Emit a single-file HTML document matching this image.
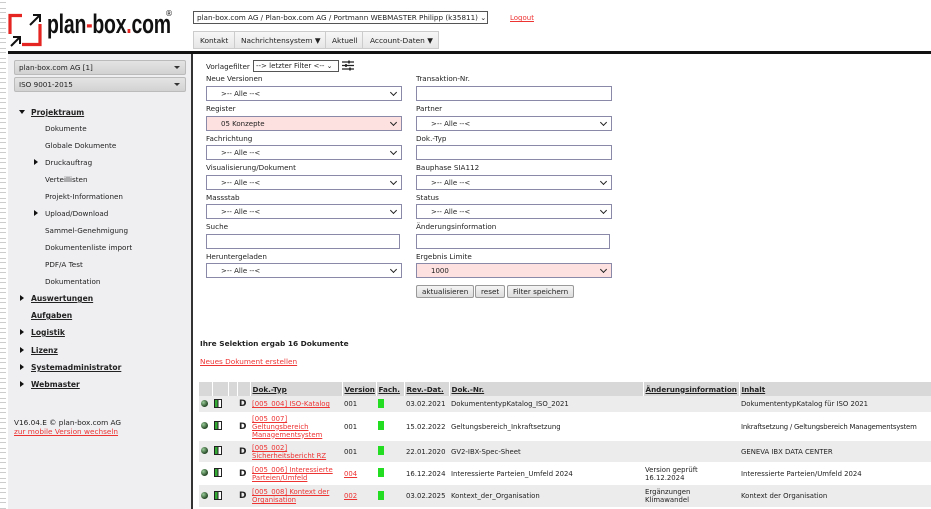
<!DOCTYPE html>
<html><head><meta charset="utf-8"><style>
*{margin:0;padding:0;box-sizing:border-box}
body{width:931px;height:509px;overflow:hidden;background:#fff;font-family:"DejaVu Sans","Liberation Sans",sans-serif;font-size:7.4px;color:#222;position:relative}
.a{position:absolute;white-space:nowrap}
.strip{position:absolute;left:0;top:0;width:6px;height:509px;background:repeating-linear-gradient(#fff 0 2px,#ccc 2px 3px,#fff 3px 8px,#ccc 8px 9px,#fff 9px 10px)}
.side{position:absolute;left:8px;top:54px;width:183px;height:455px;background:#efeff2}
.vl{position:absolute;left:191px;top:54px;width:2px;height:455px;background:#333}
.hl{position:absolute;left:8px;top:51px;width:923px;height:3px;background:#111}
.ssel{position:absolute;left:14px;width:172px;height:15px;border:1px solid #bbb;border-radius:2px;background:linear-gradient(#e4e4e4,#d2d2d2);padding:2px 4px;font-size:7.2px}
.ssel:after{content:"";position:absolute;right:5px;top:5px;border:3px solid transparent;border-top:3px solid #333}
.nav{position:absolute;left:31px;font-weight:bold;text-decoration:underline;font-size:7.6px}
.sub{position:absolute;left:45px;font-size:7.2px}
.tri{position:absolute;border:3px solid transparent;border-left:4px solid #111}
.trid{position:absolute;border:3px solid transparent;border-top:4px solid #111}
.lbl{position:absolute;font-size:7.2px}
.f{position:absolute;width:196px;height:15px;border:1px solid #8a8aa8;background:#fff;font-size:7px;padding:3px 0 0 14px}
.f.s:after{content:"";position:absolute;right:5px;top:3px;width:4px;height:4px;border-right:1.5px solid #222;border-bottom:1.5px solid #222;transform:rotate(45deg)}
.pink{background:#fde0e0}
.btn{position:absolute;top:285px;height:13px;border:1px solid #999;background:linear-gradient(#f4f4f4,#ddd);font-size:7.2px;padding:1px 5px;border-radius:2px}
table{position:absolute;left:199px;top:382px;border-collapse:collapse;width:732px;table-layout:fixed}
td{font-size:6.9px;vertical-align:middle;padding:0 2px;white-space:nowrap;overflow:hidden}
th{background:#d8d8d8;font-size:7.2px;text-align:left;padding:0 2px;height:14px;border-right:1px solid #fff;text-decoration:underline;white-space:nowrap;overflow:hidden}
tr.g td{background:#ececec}
.r{color:#e33;text-decoration:underline}
.dot{display:inline-block;width:7px;height:7px;border-radius:50%;background:radial-gradient(circle at 35% 35%,#9c9,#242 70%)}
.bk{display:inline-block;width:8px;height:9px;border:1.5px solid #222;background:linear-gradient(90deg,#3a3 0 45%,#222 45% 55%,#fff 55%)}
.gr{display:inline-block;width:6px;height:9px;background:#2d2}
</style></head><body>
<div class="strip"></div>
<svg class="a" style="left:8px;top:12px" width="36" height="36" viewBox="0 0 36 36">
<path d="M2 22V3.5H14" fill="none" stroke="#e52521" stroke-width="3.2"/>
<path d="M32 12V32.5H14" fill="none" stroke="#e52521" stroke-width="3.2"/>
<path d="M22 13L31 4M25 3H32V10" fill="none" stroke="#111" stroke-width="2"/>
<path d="M3 34L11 26M5 25H12V32" fill="none" stroke="#111" stroke-width="2"/>
</svg>
<div class="a" style="left:47px;top:9px;font-family:'Liberation Sans',sans-serif;font-weight:bold;font-size:27px;letter-spacing:-0.3px;color:#111;transform:scaleX(0.72);transform-origin:left">plan<span style="color:#e52521">-</span>box<span style="color:#e52521">.</span>com</div>
<div class="a" style="left:165px;top:9px;font-size:8px">®</div>
<div class="a" style="left:193px;top:11px;width:295px;height:13px;border:1px solid #555;font-size:7.2px;padding:1px 3px">plan-box.com AG / Plan-box.com AG / Portmann WEBMASTER Philipp (k35811) ⌄</div>
<div class="a r" style="left:510px;top:14px;font-size:7px">Logout</div>
<div class="a" style="left:193px;top:31px;height:18px;width:246px;border:1px solid #ccc;background:linear-gradient(#f7f7f7,#e6e6e6);font-size:7.4px">
<span class="a" style="left:6px;top:4px">Kontakt</span><span class="a" style="left:40px;top:0;height:16px;border-left:1px solid #ccc"></span>
<span class="a" style="left:47px;top:4px">Nachrichtensystem ▼</span><span class="a" style="left:131px;top:0;height:16px;border-left:1px solid #ccc"></span>
<span class="a" style="left:138px;top:4px">Aktuell</span><span class="a" style="left:168px;top:0;height:16px;border-left:1px solid #ccc"></span>
<span class="a" style="left:176px;top:4px">Account-Daten ▼</span></div>
<div class="hl"></div>
<div class="side"></div>
<div class="vl"></div>
<div class="ssel" style="top:60px">plan-box.com AG [1]</div>
<div class="ssel" style="top:77px">ISO 9001-2015</div>
<div class="trid" style="left:19px;top:110px"></div>
<div class="nav" style="top:108px">Projektraum</div>
<div class="sub" style="top:124px">Dokumente</div>
<div class="sub" style="top:141px">Globale Dokumente</div>
<div class="tri" style="left:34px;top:159px"></div><div class="sub" style="top:158px">Druckauftrag</div>
<div class="sub" style="top:175px">Verteillisten</div>
<div class="sub" style="top:192px">Projekt-Informationen</div>
<div class="tri" style="left:34px;top:210px"></div><div class="sub" style="top:209px">Upload/Download</div>
<div class="sub" style="top:226px">Sammel-Genehmigung</div>
<div class="sub" style="top:243px">Dokumentenliste import</div>
<div class="sub" style="top:260px">PDF/A Test</div>
<div class="sub" style="top:277px">Dokumentation</div>
<div class="tri" style="left:20px;top:295px"></div><div class="nav" style="top:294px">Auswertungen</div>
<div class="nav" style="top:311px">Aufgaben</div>
<div class="tri" style="left:20px;top:329px"></div><div class="nav" style="top:328px">Logistik</div>
<div class="tri" style="left:20px;top:347px"></div><div class="nav" style="top:346px">Lizenz</div>
<div class="tri" style="left:20px;top:364px"></div><div class="nav" style="top:363px">Systemadministrator</div>
<div class="tri" style="left:20px;top:381px"></div><div class="nav" style="top:380px">Webmaster</div>
<div class="a" style="left:14px;top:418px;font-size:7.3px">V16.04.E © plan-box.com AG</div>
<div class="a r" style="left:14px;top:427px;font-size:7.3px">zur mobile Version wechseln</div>

<div class="lbl" style="left:206px;top:62px">Vorlagefilter</div>
<div class="a" style="left:253px;top:60px;width:86px;height:12px;border:1px solid #555;font-size:7px;padding:1px 2px">--&gt; letzter Filter &lt;-- ⌄</div>
<svg class="a" style="left:342px;top:60px" width="12" height="11" viewBox="0 0 12 11"><path d="M0 2H12M0 5.5H12M0 9H12" stroke="#222" stroke-width="1.2"/><path d="M7 0.5V3.5M4 4V7M8 7.5V10.5" stroke="#222" stroke-width="1.6"/></svg>

<div class="lbl" style="left:206px;top:74px">Neue Versionen</div><div class="f s" style="left:206px;top:86px">&gt;-- Alle --&lt;</div>
<div class="lbl" style="left:416px;top:74px">Transaktion-Nr.</div><div class="f" style="left:416px;top:86px"></div>
<div class="lbl" style="left:206px;top:104px">Register</div><div class="f s pink" style="left:206px;top:116px">05 Konzepte</div>
<div class="lbl" style="left:416px;top:104px">Partner</div><div class="f s" style="left:416px;top:116px">&gt;-- Alle --&lt;</div>
<div class="lbl" style="left:206px;top:134px">Fachrichtung</div><div class="f s" style="left:206px;top:145px">&gt;-- Alle --&lt;</div>
<div class="lbl" style="left:416px;top:134px">Dok.-Typ</div><div class="f" style="left:416px;top:145px"></div>
<div class="lbl" style="left:206px;top:163px">Visualisierung/Dokument</div><div class="f s" style="left:206px;top:175px">&gt;-- Alle --&lt;</div>
<div class="lbl" style="left:416px;top:163px">Bauphase SIA112</div><div class="f s" style="left:416px;top:175px">&gt;-- Alle --&lt;</div>
<div class="lbl" style="left:206px;top:193px">Massstab</div><div class="f s" style="left:206px;top:204px">&gt;-- Alle --&lt;</div>
<div class="lbl" style="left:416px;top:193px">Status</div><div class="f s" style="left:416px;top:204px">&gt;-- Alle --&lt;</div>
<div class="lbl" style="left:206px;top:222px">Suche</div><div class="f" style="left:206px;top:234px;width:194px"></div>
<div class="lbl" style="left:416px;top:222px">Änderungsinformation</div><div class="f" style="left:416px;top:234px;width:194px"></div>
<div class="lbl" style="left:206px;top:252px">Heruntergeladen</div><div class="f s" style="left:206px;top:263px">&gt;-- Alle --&lt;</div>
<div class="lbl" style="left:416px;top:252px">Ergebnis Limite</div><div class="f s pink" style="left:416px;top:263px">1000</div>
<div class="btn" style="left:416px">aktualisieren</div>
<div class="btn" style="left:475px">reset</div>
<div class="btn" style="left:507px">Filter speichern</div>

<div class="a" style="left:200px;top:339px;font-weight:bold;font-size:7.4px">Ihre Selektion ergab 16 Dokumente</div>
<div class="a r" style="left:200px;top:357px;font-size:7.3px">Neues Dokument erstellen</div>

<table>
<colgroup><col style="width:13px"><col style="width:16px"><col style="width:9px"><col style="width:13px"><col style="width:92px"><col style="width:34px"><col style="width:28px"><col style="width:45px"><col style="width:194px"><col style="width:96px"><col style="width:192px"></colgroup>
<tr><th></th><th></th><th></th><th></th><th>Dok.-Typ</th><th>Version</th><th>Fach.</th><th>Rev.-Dat.</th><th>Dok.-Nr.</th><th>Änderungsinformation</th><th>Inhalt</th></tr>
<tr class="g" style="height:16px"><td><span class="dot"></span></td><td><span class="bk"></span></td><td></td><td><b style="font-size:9px">D</b></td><td class="r">[005_004] ISO-Katalog</td><td>001</td><td><span class="gr"></span></td><td>03.02.2021</td><td>DokumententypKatalog_ISO_2021</td><td></td><td>DokumententypKatalog für ISO 2021</td></tr>
<tr style="height:29px"><td><span class="dot"></span></td><td><span class="bk"></span></td><td></td><td><b style="font-size:9px">D</b></td><td class="r" style="line-height:8px">[005_007]<br>Geltungsbereich<br>Managementsystem</td><td>001</td><td><span class="gr"></span></td><td>15.02.2022</td><td>Geltungsbereich_Inkraftsetzung</td><td></td><td style="letter-spacing:-0.2px">Inkraftsetzung / Geltungsbereich Managementsystem</td></tr>
<tr class="g" style="height:21px"><td><span class="dot"></span></td><td><span class="bk"></span></td><td></td><td><b style="font-size:9px">D</b></td><td class="r" style="line-height:8px">[005_002]<br>Sicherheitsbericht RZ</td><td>001</td><td><span class="gr"></span></td><td>22.01.2020</td><td>GV2-IBX-Spec-Sheet</td><td></td><td>GENEVA IBX DATA CENTER</td></tr>
<tr style="height:23px"><td><span class="dot"></span></td><td><span class="bk"></span></td><td></td><td><b style="font-size:9px">D</b></td><td class="r" style="line-height:8px">[005_006] Interessierte<br>Parteien/Umfeld</td><td class="r">004</td><td><span class="gr"></span></td><td>16.12.2024</td><td>Interessierte Parteien_Umfeld 2024</td><td style="line-height:8px">Version geprüft<br>16.12.2024</td><td>Interessierte Parteien/Umfeld 2024</td></tr>
<tr class="g" style="height:22px"><td><span class="dot"></span></td><td><span class="bk"></span></td><td></td><td><b style="font-size:9px">D</b></td><td class="r" style="line-height:8px">[005_008] Kontext der<br>Organisation</td><td class="r">002</td><td><span class="gr"></span></td><td>03.02.2025</td><td>Kontext_der_Organisation</td><td style="line-height:8px">Ergänzungen<br>Klimawandel</td><td>Kontext der Organisation</td></tr>
</table>
</body></html>
